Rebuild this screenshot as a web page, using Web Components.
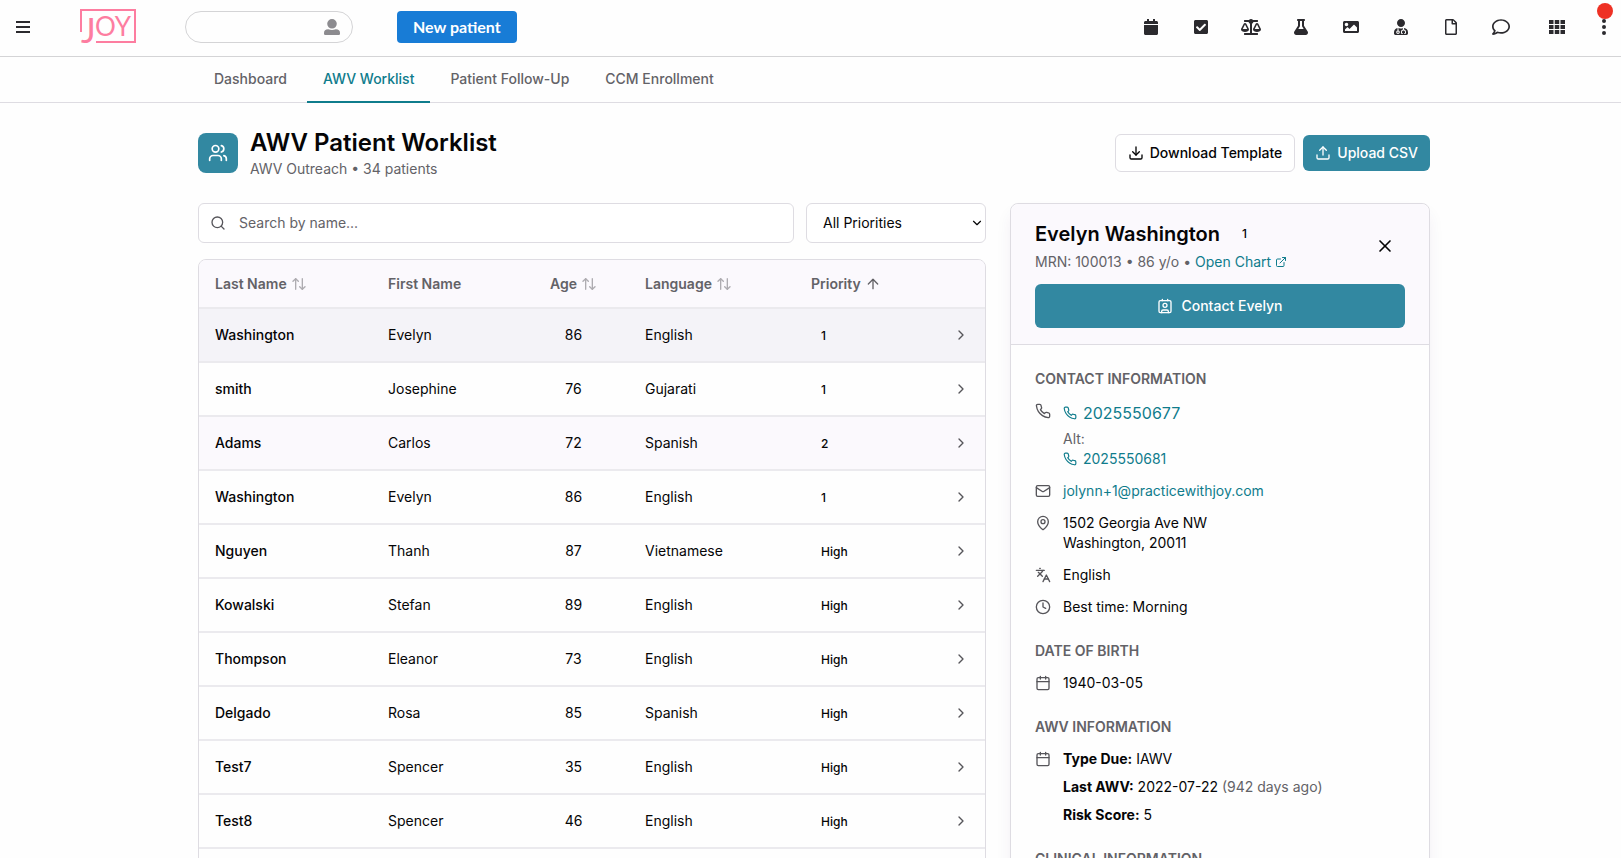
<!DOCTYPE html>
<html lang="en">
<head>
<meta charset="utf-8">
<meta name="viewport" content="width=device-width, initial-scale=1">
<title>AWV Patient Worklist</title>
<style>
    :root {
        --teal: #3288a1;
        --link: #0f7c8c;
        --text: #050506;
        --muted: #636267;
        --icon: #56555a;
        --border: #dedce2;
        --row-border: #ebeaee;
        --surface: #fbf9fd;
        --selected: #f4f3f8;
    }

    body {
        margin: 0;
        background: #fefefe;
        color: var(--text);
        font-family: Inter, "Liberation Sans", sans-serif;
        font-size: 14px;
        line-height: 20px;
    }
</style>
</head>
<body>
<joy-app>
    <joy-topbar slot="top"></joy-topbar>
    <joy-tabs slot="top">
        <joy-tab>Dashboard</joy-tab>
        <joy-tab active>AWV Worklist</joy-tab>
        <joy-tab>Patient Follow-Up</joy-tab>
        <joy-tab>CCM Enrollment</joy-tab>
    </joy-tabs>

    <page-header icon="users">
        AWV Patient Worklist
        <span slot="sub">AWV Outreach • 34 patients</span>
        <joy-button slot="actions" icon="download" variant="outline">Download Template</joy-button>
        <joy-button slot="actions" icon="upload">Upload CSV</joy-button>
    </page-header>

    <split-view>
        <worklist-filters></worklist-filters>
        <worklist-table></worklist-table>

        <patient-panel slot="side" name="Evelyn Washington" priority="1">
            <span slot="meta">MRN: 100013 • 86 y/o •</span>
            <joy-button slot="contact" icon="contact" variant="block">Contact Evelyn</joy-button>

            <info-section heading="Contact Information">
                <info-row icon="phone">
                    <phone-link size="large">2025550677</phone-link>
                    <info-alt>Alt:<phone-link slot="value">2025550681</phone-link></info-alt>
                </info-row>
                <info-row icon="mail"><mail-link>jolynn+1@practicewithjoy.com</mail-link></info-row>
                <info-row icon="pin">1502 Georgia Ave NW<br>Washington, 20011</info-row>
                <info-row icon="languages">English</info-row>
                <info-row icon="clock">Best time: Morning</info-row>
            </info-section>

            <info-section heading="Date of Birth">
                <info-row icon="calendar">1940-03-05</info-row>
            </info-section>

            <info-section heading="AWV Information">
                <info-row icon="calendar">
                    <info-facts>
                        <info-fact label="Type Due:">IAWV</info-fact>
                        <info-fact label="Last AWV:">2022-07-22 <span slot="note">(942 days ago)</span></info-fact>
                        <info-fact label="Risk Score:">5</info-fact>
                    </info-facts>
                </info-row>
            </info-section>

            <info-section heading="Clinical Information"></info-section>
        </patient-panel>
    </split-view>
</joy-app>

<script>
// stroke icons, 24x24 grid
const LINE_ICONS = {
    users: '<path d="M16 21v-2a4 4 0 0 0-4-4H6a4 4 0 0 0-4 4v2"/><circle cx="9" cy="7" r="4"/><path d="M22 21v-2a4 4 0 0 0-3-3.87"/><path d="M16 3.13a4 4 0 0 1 0 7.75"/>',
    download: '<path d="M21 15v4a2 2 0 0 1-2 2H5a2 2 0 0 1-2-2v-4"/><path d="m7 10 5 5 5-5"/><path d="M12 15V3"/>',
    upload: '<path d="M21 15v4a2 2 0 0 1-2 2H5a2 2 0 0 1-2-2v-4"/><path d="m17 8-5-5-5 5"/><path d="M12 3v12"/>',
    search: '<circle cx="11" cy="11" r="8"/><path d="m21 21-4.3-4.3"/>',
    sort: '<path d="m21 16-4 4-4-4"/><path d="M17 20V4"/><path d="m3 8 4-4 4 4"/><path d="M7 4v16"/>',
    up: '<path d="m5 12 7-7 7 7"/><path d="M12 19V5"/>',
    right: '<path d="m9 18 6-6-6-6"/>',
    down: '<path d="m6 9 6 6 6-6"/>',
    close: '<path d="M18 6 6 18"/><path d="m6 6 12 12"/>',
    external: '<path d="M15 3h6v6"/><path d="M10 14 21 3"/><path d="M18 13v6a2 2 0 0 1-2 2H5a2 2 0 0 1-2-2V8a2 2 0 0 1 2-2h6"/>',
    contact: '<path d="M17 22v-2a2 2 0 0 0-2-2H9a2 2 0 0 0-2 2v2"/><rect x="3" y="4" width="18" height="18" rx="2"/><circle cx="12" cy="11" r="3"/><path d="M8 2v2M16 2v2"/>',
    phone: '<path d="M22 16.92v3a2 2 0 0 1-2.18 2 19.79 19.79 0 0 1-8.63-3.07 19.5 19.5 0 0 1-6-6 19.79 19.79 0 0 1-3.07-8.67A2 2 0 0 1 4.11 2h3a2 2 0 0 1 2 1.72 12.84 12.84 0 0 0 .7 2.81 2 2 0 0 1-.45 2.11L8.09 9.91a16 16 0 0 0 6 6l1.27-1.27a2 2 0 0 1 2.11-.45 12.84 12.84 0 0 0 2.81.7A2 2 0 0 1 22 16.92z"/>',
    mail: '<rect x="2" y="4" width="20" height="16" rx="2"/><path d="m22 7-8.97 5.7a1.94 1.94 0 0 1-2.06 0L2 7"/>',
    pin: '<path d="M20 10c0 4.99-5.54 10.19-7.4 11.8a1 1 0 0 1-1.2 0C9.54 20.19 4 14.99 4 10a8 8 0 0 1 16 0"/><circle cx="12" cy="10" r="3"/>',
    languages: '<path d="m5 8 6 6"/><path d="m4 14 6-6 2-3"/><path d="M2 5h12"/><path d="M7 2h1"/><path d="m22 22-5-10-5 10"/><path d="M14 18h6"/>',
    clock: '<circle cx="12" cy="12" r="10"/><path d="M12 6v6l4 2"/>',
    calendar: '<path d="M8 2v4M16 2v4"/><rect x="3" y="4" width="18" height="18" rx="2"/><path d="M3 10h18"/>'
};

// filled icons: [viewBox, path]
const SOLID_ICONS = {
    bars: ['0 0 14 12', 'M0 0h14v2H0zM0 5h14v2H0zM0 10h14v2H0z'],
    person: ['0 0 16 16', 'M8 0a4.8 4.8 0 1 1 0 9.6A4.8 4.8 0 0 1 8 0zM4.2 10.3q3.8 1.6 7.6 0Q16 10.3 16 14v.8q0 1.2-1.2 1.2H1.2Q0 16 0 14.8V14q0-3.7 4.2-3.7z'],
    calendar: ['0 0 448 512', 'M12 192h424c6.6 0 12 5.4 12 12v260c0 26.5-21.5 48-48 48H48c-26.5 0-48-21.5-48-48V204c0-6.6 5.4-12 12-12zm436-44v-36c0-26.5-21.5-48-48-48h-48V12c0-6.6-5.4-12-12-12h-40c-6.6 0-12 5.4-12 12v52H160V12c0-6.6-5.4-12-12-12h-40c-6.6 0-12 5.4-12 12v52H48C21.5 64 0 85.5 0 112v36c0 6.6 5.4 12 12 12h424c6.6 0 12-5.4 12-12z'],
    check: ['0 0 448 512', 'M400 480H48c-26.51 0-48-21.49-48-48V80c0-26.51 21.49-48 48-48h352c26.51 0 48 21.49 48 48v352c0 26.51-21.49 48-48 48zm-204.686-98.059l184-184c6.248-6.248 6.248-16.379 0-22.627l-22.627-22.627c-6.248-6.248-16.379-6.249-22.628 0L184 302.745l-70.059-70.059c-6.248-6.248-16.379-6.248-22.628 0l-22.627 22.627c-6.248 6.248-6.248 16.379 0 22.627l104 104c6.249 6.25 16.379 6.25 22.628.001z'],
    scale: ['0 0 640 512', 'M256 336h-.02c0-16.18 1.34-8.73-85.05-181.51-17.65-35.29-68.19-35.36-85.87 0C-2.06 328.75.02 320.33.02 336H0c0 44.18 57.31 80 128 80s128-35.82 128-80zM128 176l72 144H56l72-144zm511.98 160c0-16.18 1.34-8.73-85.05-181.51-17.65-35.29-68.19-35.36-85.87 0-87.12 174.26-85.04 165.84-85.04 181.51H384c0 44.18 57.31 80 128 80s128-35.82 128-80h-.02zM440 320l72-144 72 144H440zm88 128H352V153.25c23.51-10.29 41.16-31.48 46.39-57.25H528c8.84 0 16-7.16 16-16V48c0-8.84-7.16-16-16-16H383.64C369.04 12.68 346.09 0 320 0s-49.04 12.68-63.64 32H112c-8.84 0-16 7.16-16 16v32c0 8.84 7.16 16 16 16h129.61c5.23 25.76 22.87 46.96 46.39 57.25V448H112c-8.84 0-16 7.16-16 16v32c0 8.84 7.16 16 16 16h416c8.84 0 16-7.16 16-16v-32c0-8.84-7.16-16-16-16z'],
    flask: ['0 0 448 512', 'M437.2 403.5L320 215V64h8c13.3 0 24-10.7 24-24V24c0-13.3-10.7-24-24-24H120c-13.3 0-24 10.7-24 24v16c0 13.3 10.7 24 24 24h8v151L10.8 403.5C-18.5 450.6 15.3 512 70.9 512h306.2c55.7 0 89.4-61.5 60.1-108.5zM137.9 320l48.2-77.6c3.7-5.2 5.8-11.6 5.8-18.4V64h64v160c0 6.9 2.2 13.2 5.8 18.4l48.2 77.6h-172z'],
    image: ['0 0 512 512', 'M464 448H48c-26.51 0-48-21.49-48-48V112c0-26.51 21.49-48 48-48h416c26.51 0 48 21.49 48 48v288c0 26.51-21.49 48-48 48zM112 120c-30.928 0-56 25.072-56 56s25.072 56 56 56 56-25.072 56-56-25.072-56-56-56zM64 384h384V272l-87.515-87.515c-4.686-4.686-12.284-4.686-16.971 0L208 320l-55.515-55.515c-4.686-4.686-12.284-4.686-16.971 0L64 336v48z'],
    doctor: ['0 0 448 512', 'M224 256c70.7 0 128-57.3 128-128S294.7 0 224 0 96 57.3 96 128s57.3 128 128 128zM104 424c0 13.3 10.7 24 24 24s24-10.7 24-24-10.7-24-24-24-24 10.7-24 24zm216-135.4v49c36.5 7.4 64 39.8 64 78.4v41.7c0 7.6-5.4 14.2-12.9 15.7l-32.2 6.4c-4.3.9-8.5-1.9-9.4-6.3l-3.1-15.7c-.9-4.3 1.9-8.6 6.3-9.4l19.3-3.9V416c0-62.8-96-65.1-96 1.9v26.7l19.3 3.9c4.3.9 7.1 5.1 6.3 9.4l-3.1 15.7c-.9 4.3-5.1 7.1-9.4 6.3l-31.2-4.2c-7.9-1.1-13.8-7.8-13.8-15.9V416c0-38.6 27.5-70.9 64-78.4v-45.2c-2.2.7-4.4 1.1-6.6 1.9-18 6.3-37.3 9.8-57.4 9.8s-39.4-3.5-57.4-9.8c-7.4-2.6-14.9-4.2-22.6-5.2v81.6c23.1 6.9 40 28.1 40 53.4 0 30.9-25.1 56-56 56s-56-25.1-56-56c0-25.3 16.9-46.5 40-53.4v-80.4C48.5 301 0 355.8 0 422.4v44.8C0 491.9 20.1 512 44.8 512h358.4c24.7 0 44.8-20.1 44.8-44.8v-44.8c0-72-56.8-130.3-128-133.8z'],
    file: ['0 0 384 512', 'M369.9 97.9L286 14C277 5 264.8-.1 252.1-.1H48C21.5 0 0 21.5 0 48v416c0 26.5 21.5 48 48 48h288c26.5 0 48-21.5 48-48V131.9c0-12.7-5.1-25-14.1-34zM332.1 128H256V51.9l76.1 76.1zM48 464V48h160v104c0 13.3 10.7 24 24 24h104v288H48z'],
    comment: ['0 0 512 512', 'M256 32C114.6 32 0 125.1 0 240c0 47.6 19.9 91.2 52.9 126.3C38 405.7 7 439.1 6.5 439.5c-6.6 7-8.4 17.2-4.6 26S14.4 480 24 480c61.5 0 110-25.7 139.1-46.3C192 442.8 223.2 448 256 448c141.4 0 256-93.1 256-208S397.4 32 256 32zm0 368c-26.7 0-53.1-4.1-78.4-12.1l-22.7-7.2-19.5 13.8c-14.3 10.1-33.9 21.4-57.5 29 7.3-12.1 14.4-25.7 19.9-40.2l10.6-28.1-20.6-21.8C69.7 314.1 48 282.2 48 240c0-88.2 93.3-160 208-160s208 71.8 208 160-93.3 160-208 160z'],
    grid: ['0 0 16 14', 'M0 0h4.5v4H0zM5.75 0h4.5v4h-4.5zM11.5 0H16v4h-4.5zM0 5h4.5v4H0zM5.75 5h4.5v4h-4.5zM11.5 5H16v4h-4.5zM0 10h4.5v4H0zM5.75 10h4.5v4h-4.5zM11.5 10H16v4h-4.5z'],
    dots: ['0 0 4 16', 'M2 0a2 2 0 1 1 0 4 2 2 0 0 1 0-4zM2 6a2 2 0 1 1 0 4 2 2 0 0 1 0-4zM2 12a2 2 0 1 1 0 4 2 2 0 0 1 0-4z']
};

const PATIENTS = [
    { last: 'Washington', first: 'Evelyn', age: 86, language: 'English', priority: '1', state: 'selected' },
    { last: 'smith', first: 'Josephine', age: 76, language: 'Gujarati', priority: '1' },
    { last: 'Adams', first: 'Carlos', age: 72, language: 'Spanish', priority: '2', state: 'hover' },
    { last: 'Washington', first: 'Evelyn', age: 86, language: 'English', priority: '1' },
    { last: 'Nguyen', first: 'Thanh', age: 87, language: 'Vietnamese', priority: 'High' },
    { last: 'Kowalski', first: 'Stefan', age: 89, language: 'English', priority: 'High' },
    { last: 'Thompson', first: 'Eleanor', age: 73, language: 'English', priority: 'High' },
    { last: 'Delgado', first: 'Rosa', age: 85, language: 'Spanish', priority: 'High' },
    { last: 'Test7', first: 'Spencer', age: 35, language: 'English', priority: 'High' },
    { last: 'Test8', first: 'Spencer', age: 46, language: 'English', priority: 'High' }
];

class JoyElement extends HTMLElement {
    constructor() {
        super();
        this.attachShadow({ mode: 'open' });
    }

    connectedCallback() {
        this.shadowRoot.innerHTML = this.render();
    }
}

class JoyIcon extends JoyElement {
    render() {
        const name = this.getAttribute('name');
        const size = this.getAttribute('size') || 16;
        const style = `<style>:host { display: block; flex: none; } svg { display: block; }</style>`;

        if (this.hasAttribute('solid')) {
            const [box, path] = SOLID_ICONS[name];
            return `${style}<svg height="${size}" viewBox="${box}" fill="currentColor" aria-hidden="true"><path d="${path}"/></svg>`;
        }

        return `${style}<svg width="${size}" height="${size}" viewBox="0 0 24 24" fill="none" stroke="currentColor"
            stroke-width="2" stroke-linecap="round" stroke-linejoin="round" aria-hidden="true">${LINE_ICONS[name]}</svg>`;
    }
}

class JoyApp extends JoyElement {
    render() {
        return `
            <style>
                :host {
                    display: flex;
                    flex-direction: column;
                    height: 100vh;
                }

                main {
                    flex: 1;
                    min-height: 0;
                    overflow: auto;
                    scrollbar-width: none;
                    padding-left: 7px;
                }

                .inner {
                    display: flex;
                    flex-direction: column;
                    gap: 24px;
                    max-width: 1232px;
                    margin: 0 auto;
                    padding: 24px 0;
                }
            </style>
            <slot name="top"></slot>
            <main><div class="inner"><slot></slot></div></main>
        `;
    }
}

class JoyLogo extends JoyElement {
    render() {
        return `
            <style>
                :host { display: block; color: #fd7da0; }
                svg { display: block; overflow: visible; }
                text { font-family: Lato, sans-serif; fill: currentColor; }
            </style>
            <svg width="56" height="36" viewBox="0 0 56 36" role="img" aria-label="JOY">
                <path d="M1 23V1h54v32H16" fill="none" stroke="currentColor" stroke-width="2"/>
                <text x="1" y="34" font-size="35">J<tspan x="15" y="27" font-size="26">OY</tspan></text>
            </svg>
        `;
    }
}

class JoyTopbar extends JoyElement {
    render() {
        const tools = [
            ['calendar', 'Calendar', 16], ['check', 'Tasks', 16], ['scale', 'Billing', 16], ['flask', 'Labs', 16],
            ['image', 'Images', 16], ['doctor', 'Providers', 16], ['file', 'Documents', 16], ['comment', 'Messages', 18]
        ];

        return `
            <style>
                :host {
                    display: flex;
                    align-items: center;
                    flex: none;
                    height: 54px;
                    padding: 0 0 2px 16px;
                    border-bottom: 1px solid #d4d4d6;
                    color: #2b2a2e;
                    line-height: 20px;
                }

                button {
                    display: flex;
                    align-items: center;
                    justify-content: center;
                    padding: 0;
                    border: 0;
                    background: none;
                    color: inherit;
                    cursor: pointer;
                }

                joy-logo { margin: 0 49px 0 50px; }

                .search {
                    display: flex;
                    align-items: center;
                    box-sizing: border-box;
                    width: 168px;
                    height: 32px;
                    padding: 0 12px;
                    border: 1px solid #d4d4d6;
                    border-radius: 16px;
                    color: #8c8b8f;
                }

                .search input {
                    flex: 1;
                    min-width: 0;
                    border: 0;
                    outline: 0;
                    background: none;
                    font: inherit;
                }

                .new {
                    height: 32px;
                    margin-left: 44px;
                    padding: 0 16px;
                    border-radius: 4px;
                    background: #187cd6;
                    color: #fff;
                    font: 700 16px/20px Lato, sans-serif;
                }

                nav {
                    display: flex;
                    margin-left: auto;
                }

                nav button { width: 50px; height: 32px; }
                nav .apps { width: 61px; }
                nav .more { position: relative; width: 34px; }

                .badge {
                    position: absolute;
                    top: -8px;
                    left: 10px;
                    width: 16px;
                    height: 16px;
                    border-radius: 50%;
                    background: #ee3124;
                }
            </style>
            <button aria-label="Menu"><joy-icon solid name="bars" size="12"></joy-icon></button>
            <joy-logo></joy-logo>
            <label class="search">
                <input type="text" aria-label="Find patient">
                <joy-icon solid name="person"></joy-icon>
            </label>
            <button class="new">New patient</button>
            <nav>
                ${tools.map(([icon, label, size]) => `<button aria-label="${label}"><joy-icon solid name="${icon}" size="${size}"></joy-icon></button>`).join('')}
                <button class="apps" aria-label="Apps"><joy-icon solid name="grid" size="14"></joy-icon></button>
                <button class="more" aria-label="More"><joy-icon solid name="dots"></joy-icon><span class="badge"></span></button>
            </nav>
        `;
    }
}

class JoyTabs extends JoyElement {
    render() {
        return `
            <style>
                :host {
                    display: block;
                    flex: none;
                    padding-left: 7px;
                    border-bottom: 1px solid var(--border);
                }

                nav {
                    display: flex;
                    gap: 4px;
                    max-width: 1232px;
                    margin: 0 auto -1px;
                }
            </style>
            <nav><slot></slot></nav>
        `;
    }
}

class JoyTab extends JoyElement {
    render() {
        return `
            <style>
                :host { display: block; }

                a {
                    display: block;
                    padding: 12px 16px;
                    border-bottom: 2px solid transparent;
                    color: var(--muted);
                    font-weight: 500;
                    text-decoration: none;
                }

                :host([active]) a {
                    border-color: var(--link);
                    color: var(--link);
                }
            </style>
            <a href="#"><slot></slot></a>
        `;
    }
}

class JoyButton extends JoyElement {
    render() {
        return `
            <style>
                :host { display: block; }

                button {
                    display: flex;
                    align-items: center;
                    justify-content: center;
                    gap: 6px;
                    padding: 8px 12px;
                    border: 0;
                    border-radius: 6px;
                    background: var(--teal);
                    color: #fff;
                    font: inherit;
                    font-weight: 500;
                    cursor: pointer;
                }

                :host([variant="outline"]) button {
                    border: 1px solid var(--border);
                    background: #fff;
                    color: var(--text);
                }

                :host([variant="block"]) button {
                    gap: 8px;
                    width: 100%;
                    padding: 12px 16px;
                }
            </style>
            <button><joy-icon name="${this.getAttribute('icon')}"></joy-icon><slot></slot></button>
        `;
    }
}

class PageHeader extends JoyElement {
    render() {
        return `
            <style>
                :host {
                    display: flex;
                    align-items: center;
                    gap: 12px;
                }

                .tile {
                    display: flex;
                    align-items: center;
                    justify-content: center;
                    width: 40px;
                    height: 40px;
                    border-radius: 8px;
                    background: var(--teal);
                    color: #fff;
                }

                h1 {
                    margin: 0;
                    font-size: 24px;
                    font-weight: 600;
                    line-height: 32px;
                }

                p { margin: 0; color: var(--muted); }

                .actions {
                    display: flex;
                    align-items: center;
                    gap: 8px;
                    margin-left: auto;
                }
            </style>
            <div class="tile"><joy-icon name="${this.getAttribute('icon')}" size="20"></joy-icon></div>
            <div>
                <h1><slot></slot></h1>
                <p><slot name="sub"></slot></p>
            </div>
            <div class="actions"><slot name="actions"></slot></div>
        `;
    }
}

class SplitView extends JoyElement {
    render() {
        return `
            <style>
                :host {
                    display: grid;
                    grid-template-columns: minmax(0, 1fr) 420px;
                    gap: 24px;
                }

                .list {
                    display: flex;
                    flex-direction: column;
                    gap: 16px;
                }
            </style>
            <div class="list"><slot></slot></div>
            <slot name="side"></slot>
        `;
    }
}

class WorklistFilters extends JoyElement {
    render() {
        return `
            <style>
                :host { display: flex; gap: 12px; }

                .field {
                    display: flex;
                    align-items: center;
                    position: relative;
                    box-sizing: border-box;
                    height: 40px;
                    border: 1px solid var(--border);
                    border-radius: 6px;
                    background: #fff;
                }

                .search {
                    flex: 1;
                    gap: 13px;
                    padding: 0 11px;
                    color: var(--icon);
                }

                input {
                    flex: 1;
                    min-width: 0;
                    padding: 0;
                    border: 0;
                    outline: 0;
                    background: none;
                    font: inherit;
                }

                input::placeholder { color: var(--muted); opacity: 1; }

                .priority { width: 180px; }

                select {
                    width: 100%;
                    height: 100%;
                    padding: 0 16px;
                    border: 0;
                    border-radius: 6px;
                    background: none;
                    color: var(--text);
                    font: inherit;
                    appearance: none;
                }

                .priority joy-icon {
                    position: absolute;
                    right: 1px;
                    pointer-events: none;
                }
            </style>
            <label class="field search">
                <joy-icon name="search"></joy-icon>
                <input type="text" placeholder="Search by name..." aria-label="Search by name">
            </label>
            <label class="field priority">
                <select aria-label="Priority">
                    <option>All Priorities</option>
                    <option>High</option>
                </select>
                <joy-icon name="down" size="14"></joy-icon>
            </label>
        `;
    }
}

class WorklistTable extends JoyElement {
    render() {
        return `
            <style>
                :host {
                    display: block;
                    flex: 1;
                    overflow: hidden;
                    border: 1px solid var(--border);
                    border-radius: 8px;
                }

                table {
                    width: 100%;
                    table-layout: fixed;
                    border-collapse: separate;
                    border-spacing: 0;
                }

                .last { width: 173px; }
                .first { width: 146px; }
                .age { width: 111px; }
                .language { width: 166px; }
                .open { width: 48px; }

                th, td {
                    height: 52px;
                    padding: 0 16px;
                    border-bottom: 2px solid var(--row-border);
                    text-align: left;
                    font-weight: 400;
                }

                th {
                    height: 47px;
                    background: var(--surface);
                    color: var(--muted);
                }

                th button {
                    display: inline-flex;
                    align-items: center;
                    gap: 4px;
                    padding: 0;
                    border: 0;
                    background: none;
                    color: inherit;
                    font: inherit;
                    font-weight: 600;
                    vertical-align: middle;
                    cursor: pointer;
                }

                th.plain { font-weight: 600; }
                th joy-icon[name="sort"] { opacity: .5; }
                .center { text-align: center; }
                .name { font-weight: 500; }

                .selected { background: var(--selected); }
                .hover { background: var(--surface); }

                .badge {
                    padding: 0 10px;
                    font-size: 12px;
                    font-weight: 500;
                }

                .chevron {
                    padding-left: 0;
                    color: var(--icon);
                }

                .chevron joy-icon { margin-left: auto; width: 16px; }
            </style>
            <table>
                <colgroup>
                    <col class="last"><col class="first"><col class="age"><col class="language"><col><col class="open">
                </colgroup>
                <thead>
                    <tr>
                        <th><button>Last Name<joy-icon name="sort"></joy-icon></button></th>
                        <th class="plain">First Name</th>
                        <th class="center"><button>Age<joy-icon name="sort"></joy-icon></button></th>
                        <th><button>Language<joy-icon name="sort"></joy-icon></button></th>
                        <th><button>Priority<joy-icon name="up"></joy-icon></button></th>
                        <th></th>
                    </tr>
                </thead>
                <tbody>
                    ${PATIENTS.map(p => `
                    <tr class="${p.state || ''}">
                        <td class="name">${p.last}</td>
                        <td>${p.first}</td>
                        <td class="center">${p.age}</td>
                        <td>${p.language}</td>
                        <td><span class="badge">${p.priority}</span></td>
                        <td class="chevron"><joy-icon name="right"></joy-icon></td>
                    </tr>`).join('')}
                </tbody>
            </table>
        `;
    }
}

class PatientPanel extends JoyElement {
    render() {
        return `
            <style>
                :host {
                    display: block;
                    border: 1px solid var(--border);
                    border-radius: 8px;
                    background: #fefefe;
                    box-shadow: 0 10px 16px rgba(60, 40, 100, .06);
                }

                header {
                    padding: 16px 24px;
                    border-bottom: 1px solid var(--border);
                    border-radius: 8px 8px 0 0;
                    background: var(--surface);
                }

                .top {
                    display: flex;
                    align-items: center;
                    justify-content: space-between;
                    margin-bottom: 12px;
                }

                .title {
                    display: flex;
                    align-items: center;
                    gap: 12px;
                    margin-bottom: 4px;
                }

                h2 {
                    margin: 0;
                    font-size: 20px;
                    font-weight: 600;
                    line-height: 28px;
                }

                .badge {
                    padding: 0 10px;
                    font-size: 12px;
                    font-weight: 500;
                }

                .meta {
                    display: flex;
                    gap: 4px;
                    color: var(--muted);
                }

                a {
                    display: flex;
                    align-items: center;
                    gap: 4px;
                    color: var(--link);
                    text-decoration: none;
                }

                .close {
                    display: flex;
                    align-items: center;
                    justify-content: center;
                    width: 40px;
                    height: 40px;
                    padding: 0;
                    border: 0;
                    background: none;
                    color: var(--text);
                    cursor: pointer;
                }

                .body {
                    display: flex;
                    flex-direction: column;
                    gap: 24px;
                    padding: 24px;
                }
            </style>
            <header>
                <div class="top">
                    <div>
                        <div class="title">
                            <h2>${this.getAttribute('name')}</h2>
                            <span class="badge">${this.getAttribute('priority')}</span>
                        </div>
                        <div class="meta">
                            <slot name="meta"></slot>
                            <a href="#">Open Chart<joy-icon name="external" size="12"></joy-icon></a>
                        </div>
                    </div>
                    <button class="close" aria-label="Close"><joy-icon name="close" size="20"></joy-icon></button>
                </div>
                <slot name="contact"></slot>
            </header>
            <div class="body"><slot></slot></div>
        `;
    }
}

class InfoSection extends JoyElement {
    render() {
        return `
            <style>
                :host {
                    display: flex;
                    flex-direction: column;
                    gap: 12px;
                }

                h3 {
                    margin: 0;
                    color: var(--muted);
                    font-size: 14px;
                    font-weight: 600;
                    text-transform: uppercase;
                }
            </style>
            <h3>${this.getAttribute('heading')}</h3>
            <slot></slot>
        `;
    }
}

class InfoRow extends JoyElement {
    render() {
        return `
            <style>
                :host { display: flex; gap: 12px; }
                joy-icon { margin-top: 2px; color: var(--icon); }
            </style>
            <joy-icon name="${this.getAttribute('icon')}"></joy-icon>
            <div><slot></slot></div>
        `;
    }
}

class InfoAlt extends JoyElement {
    render() {
        return `
            <style>
                :host { display: block; margin-top: 4px; color: var(--muted); }
            </style>
            <slot></slot><slot name="value"></slot>
        `;
    }
}

class InfoFacts extends JoyElement {
    render() {
        return `
            <style>
                :host { display: flex; flex-direction: column; gap: 8px; }
            </style>
            <slot></slot>
        `;
    }
}

class InfoFact extends JoyElement {
    render() {
        return `
            <style>
                :host { display: block; }
                b { font-weight: 700; }
                ::slotted([slot="note"]) { color: var(--muted); }
            </style>
            <b>${this.getAttribute('label')}</b> <slot></slot><slot name="note"></slot>
        `;
    }
}

class PhoneLink extends JoyElement {
    render() {
        return `
            <style>
                :host { display: block; }

                a {
                    display: flex;
                    align-items: center;
                    gap: 6px;
                    color: var(--link);
                    text-decoration: none;
                }

                :host([size="large"]) a { font-size: 16px; line-height: 24px; }
            </style>
            <a href="tel:${this.textContent}"><joy-icon name="phone" size="14"></joy-icon><slot></slot></a>
        `;
    }
}

class MailLink extends JoyElement {
    render() {
        return `
            <style>
                :host { display: block; }
                a { color: var(--link); text-decoration: none; }
            </style>
            <a href="mailto:${this.textContent}"><slot></slot></a>
        `;
    }
}

customElements.define('joy-icon', JoyIcon);
customElements.define('joy-app', JoyApp);
customElements.define('joy-logo', JoyLogo);
customElements.define('joy-topbar', JoyTopbar);
customElements.define('joy-tabs', JoyTabs);
customElements.define('joy-tab', JoyTab);
customElements.define('joy-button', JoyButton);
customElements.define('page-header', PageHeader);
customElements.define('split-view', SplitView);
customElements.define('worklist-filters', WorklistFilters);
customElements.define('worklist-table', WorklistTable);
customElements.define('patient-panel', PatientPanel);
customElements.define('info-section', InfoSection);
customElements.define('info-row', InfoRow);
customElements.define('info-alt', InfoAlt);
customElements.define('info-facts', InfoFacts);
customElements.define('info-fact', InfoFact);
customElements.define('phone-link', PhoneLink);
customElements.define('mail-link', MailLink);
</script>
</body>
</html>
